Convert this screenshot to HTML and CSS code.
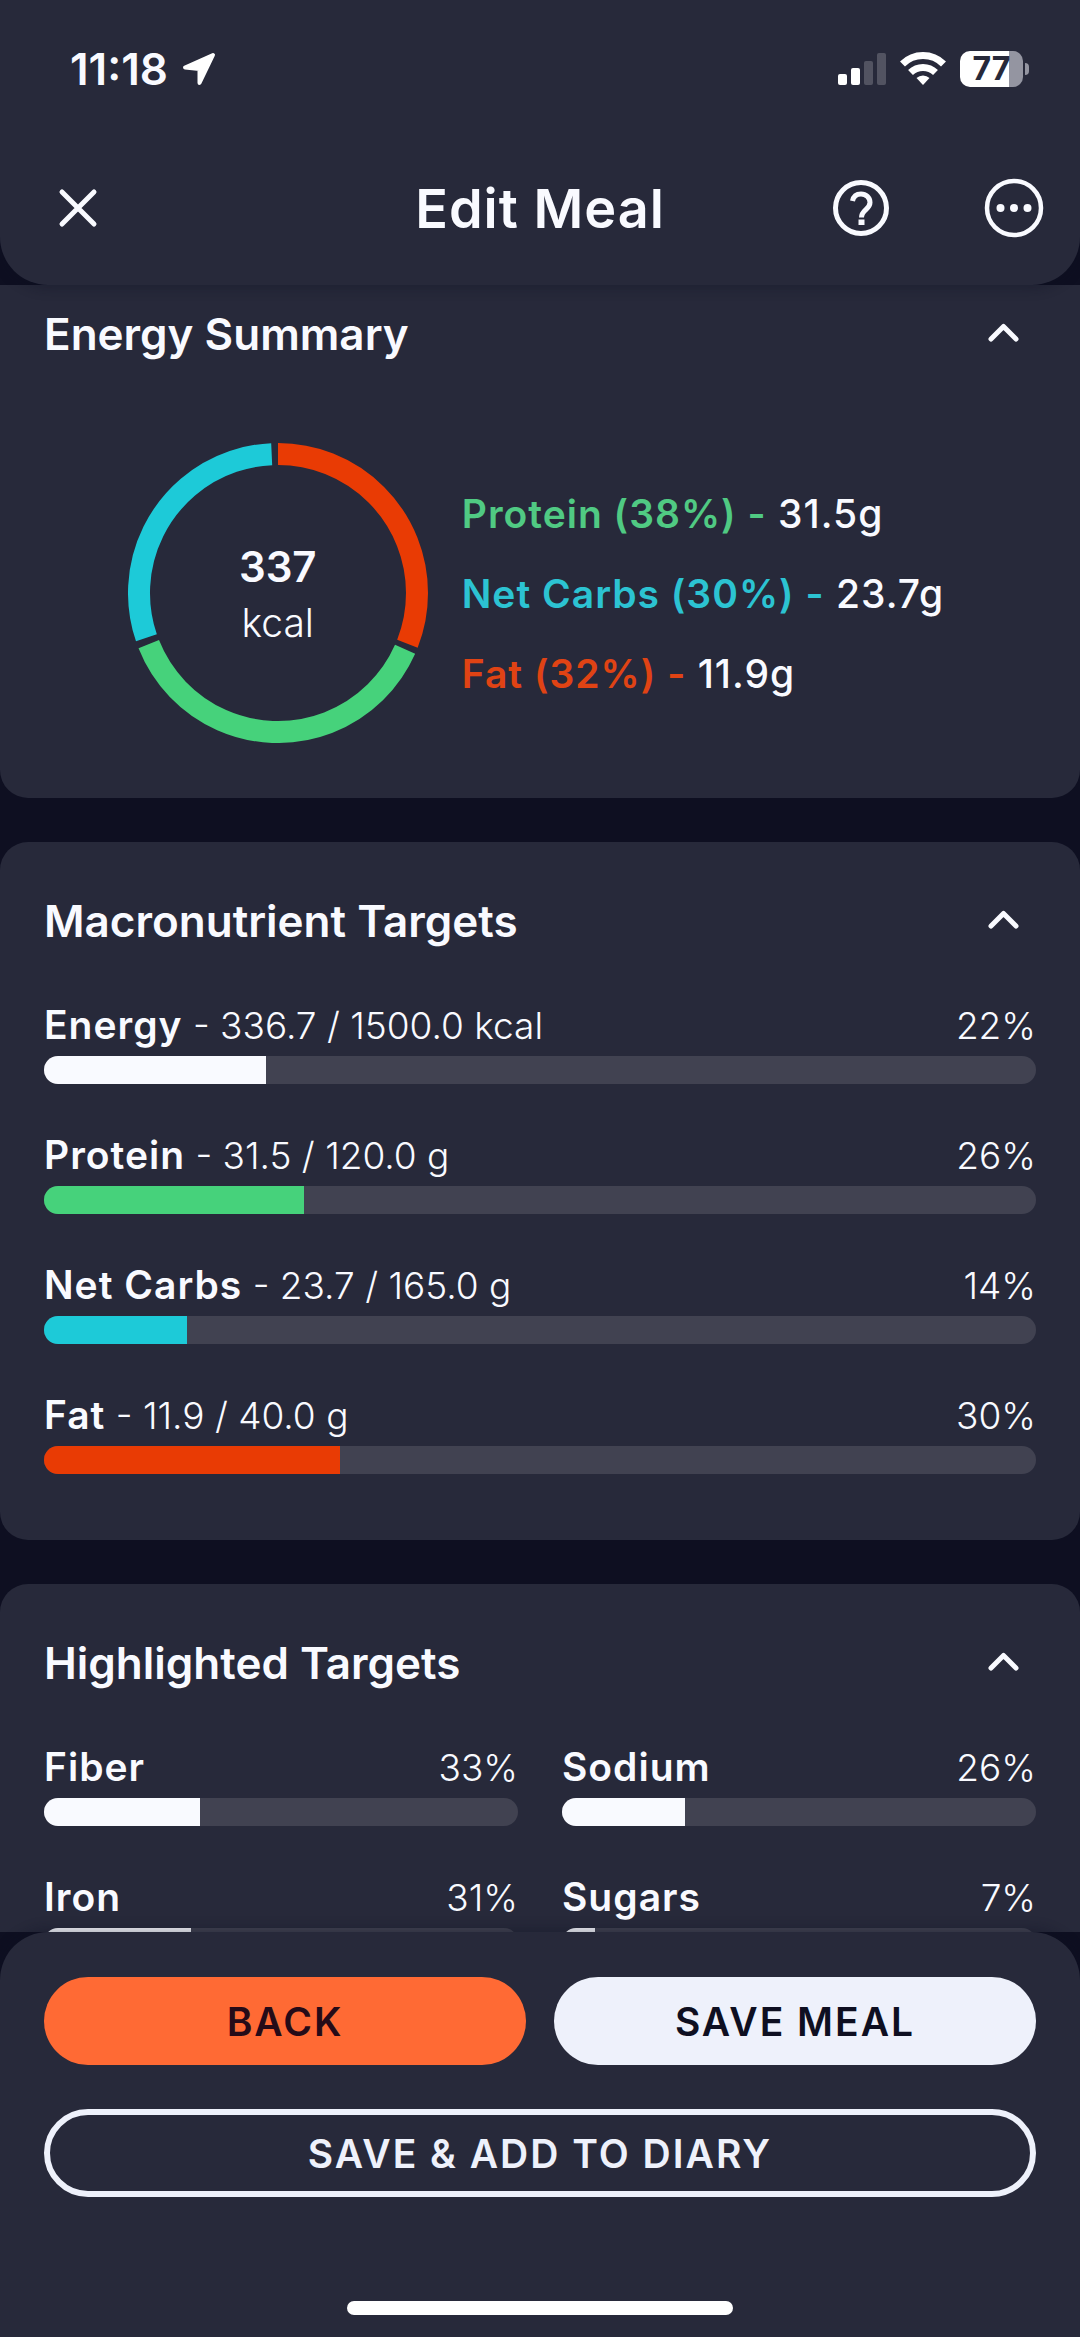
FILE: index.html
```html
<!DOCTYPE html>
<html lang="en">
<head>
  <meta charset="UTF-8">
  <title>Edit Meal</title>
  <meta name="viewport" content="width=device-width, initial-scale=1.0">
  <link rel="stylesheet" href="styles.css">
</head>
<body>
  <header class="top">
    <div class="status-bar">
      <div class="status-left">
        <span class="time">11:18</span>
        <svg width="34" height="34" viewBox="0 0 34 34" fill="#fff" stroke="#fff" stroke-width="4" stroke-linejoin="round">
          <path d="M31 3L3 15.500l14.500 1.500V31z"/>
        </svg>
      </div>
      <div class="status-right">
        <svg width="48" height="36" viewBox="0 0 48 36" fill="#fff">
          <rect x="0" y="23" width="9" height="11" rx="2"/>
          <rect x="13" y="17" width="9" height="17" rx="2"/>
          <rect x="26" y="10" width="9" height="24" rx="2" opacity=".2"/>
          <rect x="39" y="2" width="9" height="32" rx="2" opacity=".2"/>
        </svg>
        <svg width="46" height="36" viewBox="0 0 46 36" fill="none" stroke="#fff" stroke-width="7">
          <path d="M2.500 13a29 29 0 0 1 41 0"/>
          <path d="M10.500 21.500a18 18 0 0 1 25 0"/>
          <path d="M23 34l-6.500-7a9.500 9.500 0 0 1 13 0z" fill="#fff" stroke="none"/>
        </svg>
        <div class="battery"><span>77</span></div>
      </div>
    </div>
    <div class="title-bar">
      <button class="icon-btn close-btn" aria-label="Close">
        <svg width="60" height="60" viewBox="0 0 60 60" fill="none" stroke="#f9faff" stroke-width="5" stroke-linecap="round">
          <path d="M14 14l32 32M46 14L14 46"/>
        </svg>
      </button>
      <h1>Edit Meal</h1>
      <div class="title-actions">
        <button class="icon-btn" aria-label="Help">
          <svg width="60" height="60" viewBox="0 0 60 60" fill="none" stroke="#f9faff" stroke-width="5">
            <circle cx="30" cy="30" r="25.500"/>
            <path d="M21.500 23c1-5 4.500-7 8.500-7 5 0 9 3.500 9 8.500 0 7-8.500 7.500-8.500 15"/>
            <path d="M27.500 41.500h6v5.500h-6z" fill="#f9faff" stroke="none"/>
          </svg>
        </button>
        <button class="icon-btn" aria-label="More options">
          <svg width="60" height="60" viewBox="0 0 60 60" fill="none" stroke="#f9faff" stroke-width="4.500">
            <circle cx="30" cy="30" r="27"/>
            <g fill="#f9faff" stroke="none">
              <circle cx="16.500" cy="30" r="4"/>
              <circle cx="30" cy="30" r="4"/>
              <circle cx="43.500" cy="30" r="4"/>
            </g>
          </svg>
        </button>
      </div>
    </div>
  </header>

  <main>
    <section class="card summary">
      <div class="card-head">
        <h2>Energy Summary</h2>
        <button class="icon-btn" aria-label="Collapse Energy Summary">
          <svg width="54" height="54" viewBox="0 0 54 54" fill="none" stroke="#f9faff" stroke-width="5" stroke-linecap="round" stroke-linejoin="round"><path d="M15 32L27.500 19.500 40 32"/></svg>
        </button>
      </div>
      <div class="energy">
        <div class="donut">
          <svg viewBox="0 0 300 300" fill="none" stroke-width="22">
            <circle cx="150" cy="150" r="139" pathLength="360" stroke="#e93b04" stroke-dasharray="111.400 360" transform="rotate(-90 150 150)"/>
            <circle cx="150" cy="150" r="139" pathLength="360" stroke="#46d27b" stroke-dasharray="134.500 360" transform="rotate(23.900 150 150)"/>
            <circle cx="150" cy="150" r="139" pathLength="360" stroke="#1dcad8" stroke-dasharray="106.200 360" transform="rotate(161.200 150 150)"/>
          </svg>
          <div class="donut-text">
            <strong>337</strong>
            <span>kcal</span>
          </div>
        </div>
        <ul class="legend">
          <li><b class="protein">Protein (38%) -</b> 31.5g</li>
          <li><b class="carbs">Net Carbs (30%) -</b> 23.7g</li>
          <li><b class="fat">Fat (32%) -</b> 11.9g</li>
        </ul>
      </div>
    </section>

    <section class="card">
      <div class="card-head">
        <h2>Macronutrient Targets</h2>
        <button class="icon-btn" aria-label="Collapse Macronutrient Targets">
          <svg width="54" height="54" viewBox="0 0 54 54" fill="none" stroke="#f9faff" stroke-width="5" stroke-linecap="round" stroke-linejoin="round"><path d="M15 32L27.500 19.500 40 32"/></svg>
        </button>
      </div>
      <div class="targets">
        <div class="target">
          <p><span><b>Energy</b> - 336.7 / 1500.0 kcal</span><span>22%</span></p>
          <div class="bar"><div class="fill" style="width: 22.400%"></div></div>
        </div>
        <div class="target">
          <p><span><b>Protein</b> - 31.5 / 120.0 g</span><span>26%</span></p>
          <div class="bar"><div class="fill fill-protein" style="width: 26.200%"></div></div>
        </div>
        <div class="target">
          <p><span><b>Net Carbs</b> - 23.7 / 165.0 g</span><span>14%</span></p>
          <div class="bar"><div class="fill fill-carbs" style="width: 14.400%"></div></div>
        </div>
        <div class="target">
          <p><span><b>Fat</b> - 11.9 / 40.0 g</span><span>30%</span></p>
          <div class="bar"><div class="fill fill-fat" style="width: 29.800%"></div></div>
        </div>
      </div>
    </section>

    <section class="card">
      <div class="card-head">
        <h2>Highlighted Targets</h2>
        <button class="icon-btn" aria-label="Collapse Highlighted Targets">
          <svg width="54" height="54" viewBox="0 0 54 54" fill="none" stroke="#f9faff" stroke-width="5" stroke-linecap="round" stroke-linejoin="round"><path d="M15 32L27.500 19.500 40 32"/></svg>
        </button>
      </div>
      <div class="targets two-col">
        <div class="target">
          <p><b>Fiber</b><span>33%</span></p>
          <div class="bar"><div class="fill" style="width: 33%"></div></div>
        </div>
        <div class="target">
          <p><b>Sodium</b><span>26%</span></p>
          <div class="bar"><div class="fill" style="width: 26%"></div></div>
        </div>
        <div class="target">
          <p><b>Iron</b><span>31%</span></p>
          <div class="bar"><div class="fill" style="width: 31%"></div></div>
        </div>
        <div class="target">
          <p><b>Sugars</b><span>7%</span></p>
          <div class="bar"><div class="fill" style="width: 7%"></div></div>
        </div>
      </div>
    </section>
  </main>

  <footer class="actions">
    <div class="action-row">
      <button class="btn btn-back">BACK</button>
      <button class="btn btn-save">SAVE MEAL</button>
    </div>
    <button class="btn btn-outline">SAVE &amp; ADD TO DIARY</button>
    <div class="home-bar"></div>
  </footer>
</body>
</html>
```

FILE: styles.css
```css
* {
  box-sizing: border-box;
}

body {
  margin: 0;
  height: 100vh;
  display: flex;
  flex-direction: column;
  background: #0e0f21;
  color: #f9faff;
  font-family: Inter, 'Liberation Sans', sans-serif;
}

h1, h2, p, ul {
  margin: 0;
  padding: 0;
}

svg {
  display: block;
}

button {
  font-family: inherit;
  cursor: pointer;
}

.icon-btn {
  padding: 0;
  border: none;
  background: none;
}

/* Header */
.top {
  position: relative;
  z-index: 1;
  flex: none;
  padding: 42px 36px 46px;
  background: #27293a;
  border-radius: 0 0 48px 48px;
  box-shadow: 0 4px 12px rgba(14, 15, 33, 0.3);
}

.status-bar {
  display: flex;
  justify-content: space-between;
  align-items: center;
  height: 54px;
  padding: 0 14px 0 34px;
}

.status-left {
  display: flex;
  align-items: center;
  gap: 14px;
}

.time {
  font-size: 44px;
  font-weight: 600;
}

.status-right {
  display: flex;
  align-items: center;
  gap: 14px;
}

.battery {
  position: relative;
  width: 63px;
  height: 36px;
  margin-right: 7px;
  border-radius: 10px;
  background: linear-gradient(to right, #fff 77%, #9495a1 77%);
  color: #27293a;
  font-size: 32px;
  font-weight: 700;
  line-height: 36px;
  text-align: center;
}

.battery::after {
  content: "";
  position: absolute;
  left: 65px;
  top: 12px;
  width: 4px;
  height: 12px;
  border-radius: 0 6px 6px 0;
  background: #9495a1;
}

.title-bar {
  display: grid;
  grid-template-columns: 1fr auto 1fr;
  align-items: center;
  margin-top: 81px;
}

.title-bar h1 {
  padding-top: 2px;
  font-size: 54px;
  font-weight: 600;
  line-height: 60px;
  letter-spacing: 1px;
}

.close-btn {
  justify-self: start;
  margin-left: 12px;
}

.title-actions {
  display: flex;
  justify-content: flex-end;
  gap: 93px;
}

/* Cards */
main {
  flex: 1;
  min-height: 0;
  overflow: hidden;
}

.card {
  margin-bottom: 44px;
  padding: 52px 44px 66px;
  background: #27293a;
  border-radius: 28px;
}

.card-head {
  display: flex;
  justify-content: space-between;
  align-items: center;
  padding-right: 6px;
}

.card-head h2 {
  font-size: 44px;
  font-weight: 600;
  line-height: 54px;
}

.summary {
  padding-top: 22px;
  padding-bottom: 55px;
  border-radius: 0 0 28px 28px;
}

.energy {
  display: flex;
  justify-content: center;
  align-items: center;
  gap: 34px;
  margin-top: 82px;
  padding-right: 8px;
}

.donut {
  position: relative;
  width: 300px;
  height: 300px;
}

.donut-text {
  position: absolute;
  inset: 0;
  display: flex;
  flex-direction: column;
  align-items: center;
  justify-content: center;
  padding-top: 4px;
  font-size: 39px;
  font-weight: 300;
  line-height: 56px;
}

.donut-text strong {
  font-size: 42px;
  font-weight: 600;
}

.legend {
  padding-top: 2px;
  list-style: none;
  font-size: 39px;
  font-weight: 500;
  line-height: 80px;
  letter-spacing: 1px;
}

.legend b {
  font-weight: 600;
}

.protein {
  color: #50ca83;
}

.carbs {
  color: #2cc3d2;
}

.fat {
  color: #e04314;
}

/* Target rows */
.targets {
  display: grid;
  gap: 46px 44px;
  margin-top: 52px;
}

.two-col {
  grid-template-columns: 1fr 1fr;
}

.target p {
  display: flex;
  justify-content: space-between;
  align-items: baseline;
  height: 56px;
  font-size: 37px;
  font-weight: 300;
  line-height: 50px;
}

.target b {
  font-size: 39px;
  font-weight: 600;
  letter-spacing: 1px;
}

.bar {
  height: 28px;
  border-radius: 14px;
  background: #414251;
  overflow: hidden;
}

.fill {
  height: 100%;
  background: #f9faff;
}

.fill-protein {
  background: #46d27b;
}

.fill-carbs {
  background: #1dcad8;
}

.fill-fat {
  background: #e93b04;
}

/* Bottom actions */
.actions {
  position: relative;
  z-index: 1;
  flex: none;
  display: flex;
  flex-direction: column;
  gap: 44px;
  padding: 45px 44px 22px;
  background: #27293a;
  border-radius: 48px 48px 0 0;
  box-shadow: 0 -4px 12px rgba(14, 15, 33, 0.3);
}

.action-row {
  display: flex;
  gap: 28px;
}

.btn {
  flex: 1;
  min-height: 88px;
  border: none;
  border-radius: 44px;
  font-size: 39px;
  font-weight: 600;
  letter-spacing: 2px;
}

.btn-back {
  background: #ff6a34;
  color: #260b18;
}

.btn-save {
  background: #eef1fb;
  color: #0e0f21;
}

.btn-outline {
  border: 6px solid #eef1fb;
  background: none;
  color: #eef1fb;
}

.home-bar {
  width: 386px;
  height: 14px;
  margin: 60px auto 0;
  border-radius: 7px;
  background: #fff;
}
```
